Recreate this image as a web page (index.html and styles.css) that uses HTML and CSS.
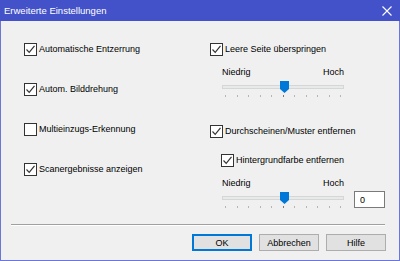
FILE: index.html
```html
<!DOCTYPE html>
<html lang="de">
<head>
  <meta charset="UTF-8">
  <title>Erweiterte Einstellungen</title>
  <link rel="stylesheet" href="styles.css">
</head>
<body>

  <div class="dialog">
    <div class="titlebar">
      <span class="title">Erweiterte Einstellungen</span>
      <svg class="close" width="10" height="10" viewBox="0 0 10 10">
        <path d="M0.5 0.5 L9.5 9.5 M9.5 0.5 L0.5 9.5" stroke="#fff" stroke-width="1.1"/>
      </svg>
    </div>

    <div class="frame">
      <div class="columns">
        <!-- left column -->
        <div class="col col-left">
          <label class="check"><span class="box"><svg width="11" height="11" viewBox="0 0 11 11"><path d="M1.5 5.5 L4.2 8.3 L9.5 1.8" fill="none" stroke="#333" stroke-width="1.2"/></svg></span>Automatische Entzerrung</label>
          <label class="check"><span class="box"><svg width="11" height="11" viewBox="0 0 11 11"><path d="M1.5 5.5 L4.2 8.3 L9.5 1.8" fill="none" stroke="#333" stroke-width="1.2"/></svg></span>Autom. Bilddrehung</label>
          <label class="check"><span class="box"></span>Multieinzugs-Erkennung</label>
          <label class="check"><span class="box"><svg width="11" height="11" viewBox="0 0 11 11"><path d="M1.5 5.5 L4.2 8.3 L9.5 1.8" fill="none" stroke="#333" stroke-width="1.2"/></svg></span>Scanergebnisse anzeigen</label>
        </div>

        <!-- right column -->
        <div class="col col-right">
          <label class="check"><span class="box"><svg width="11" height="11" viewBox="0 0 11 11"><path d="M1.5 5.5 L4.2 8.3 L9.5 1.8" fill="none" stroke="#333" stroke-width="1.2"/></svg></span>Leere Seite überspringen</label>

          <div class="slider-group">
            <div class="slider-labels"><span>Niedrig</span><span>Hoch</span></div>
            <div class="slider-row">
              <div class="slider">
                <div class="track"></div>
                <svg class="thumb" width="9" height="12" viewBox="0 0 9 12"><path d="M0 0 H9 V8 L4.5 12 L0 8 Z" fill="#0078d7"/></svg>
                <div class="ticks"><i></i><i></i><i></i><i></i><i></i><i class="mid"></i><i></i><i></i><i></i><i></i><i></i></div>
              </div>
            </div>
          </div>

          <label class="check check-gap"><span class="box"><svg width="11" height="11" viewBox="0 0 11 11"><path d="M1.5 5.5 L4.2 8.3 L9.5 1.8" fill="none" stroke="#333" stroke-width="1.2"/></svg></span>Durchscheinen/Muster entfernen</label>
          <label class="check indent"><span class="box"><svg width="11" height="11" viewBox="0 0 11 11"><path d="M1.5 5.5 L4.2 8.3 L9.5 1.8" fill="none" stroke="#333" stroke-width="1.2"/></svg></span>Hintergrundfarbe entfernen</label>

          <div class="slider-group slider-group-2">
            <div class="slider-labels"><span>Niedrig</span><span>Hoch</span></div>
            <div class="slider-row">
              <div class="slider">
                <div class="track"></div>
                <svg class="thumb" width="9" height="12" viewBox="0 0 9 12"><path d="M0 0 H9 V8 L4.5 12 L0 8 Z" fill="#0078d7"/></svg>
                <div class="ticks"><i></i><i></i><i></i><i></i><i></i><i class="mid"></i><i></i><i></i><i></i><i></i><i></i></div>
              </div>
              <input class="value" type="text" value="0">
            </div>
          </div>
        </div>
      </div>

      <div class="separator"></div>

      <div class="buttons">
        <button class="btn default">OK</button>
        <button class="btn">Abbrechen</button>
        <button class="btn">Hilfe</button>
      </div>
    </div>
  </div>

</body>
</html>
```

FILE: styles.css
```css
html, body {
  margin: 0;
  padding: 0;
}
body {
  font-family: "Liberation Sans", Arial, sans-serif;
  font-size: 9px;
  color: #000;
  background: #f0f0f0;
}
.dialog {
  width: 400px;
  height: 261px;
  display: flex;
  flex-direction: column;
}
.titlebar {
  height: 21px;
  flex: none;
  background: #4352c8;
  color: #fff;
  display: flex;
  align-items: center;
  justify-content: space-between;
  padding: 0 8px 0 4px;
  font-size: 9.5px;
}
.close {
  display: block;
}
.frame {
  flex: 1;
  background: #f0f0f0;
  border: 1px solid #6b76d9;
  border-top: none;
  display: flex;
  flex-direction: column;
}
.columns {
  display: flex;
  height: 200px;
}
.col {
  display: flex;
  flex-direction: column;
}
.col-left {
  width: 186px;
  padding: 20px 0 0 23px;
  gap: 24px;
}
.col-right {
  padding-top: 20px;
}
.check {
  display: flex;
  align-items: center;
  height: 16px;
  white-space: nowrap;
}
.box {
  width: 11px;
  height: 11px;
  border: 1px solid #333;
  background: #fff;
  margin-right: 2px;
  flex: none;
  display: flex;
}
.box svg {
  display: block;
}
.indent {
  margin-left: 11px;
}
.check-gap {
  margin-top: 18px;
}
.indent {
  margin-top: 13px;
}
.slider-group {
  margin-left: 12px;
  margin-top: 8px;
}
.slider-group-2 {
  margin-top: 8px;
}
.slider-labels {
  width: 122px;
  display: flex;
  justify-content: space-between;
  height: 14px;
  line-height: 14px;
}
.slider-row {
  display: flex;
  align-items: flex-start;
}
.slider {
  position: relative;
  width: 122px;
  height: 26px;
}
.track {
  margin-top: 6px;
  height: 2px;
  background: #e7eaea;
  border: 1px solid #d6d6d6;
}
.thumb {
  position: absolute;
  left: 58px;
  top: 2px;
}
.ticks {
  display: flex;
  justify-content: space-between;
  padding: 0 3px;
  margin-top: 6px;
}
.ticks i {
  width: 1px;
  height: 2px;
  background: #b5b5b5;
}
.ticks i.mid {
  background: #777;
}
.value {
  margin-left: 10px;
  margin-top: 1px;
  width: 31px;
  height: 17px;
  box-sizing: border-box;
  border: 1px solid #7a7a7a;
  background: #fff;
  font-family: inherit;
  font-size: 9px;
  padding: 0 5px;
}
.separator {
  margin: 3px 14px 0 10px;
  height: 1px;
  border-top: 1px solid #a0a0a0;
  background: #fff;
}
.buttons {
  display: flex;
  justify-content: flex-end;
  gap: 7px;
  padding: 8px 13px 0 0;
}
.btn {
  width: 60px;
  height: 17px;
  box-sizing: border-box;
  background: #e1e1e1;
  border: 1px solid #adadad;
  font-family: inherit;
  font-size: 9px;
  padding: 0;
  line-height: 14px;
}
.btn.default {
  border: 2px solid #0078d7;
}
```
